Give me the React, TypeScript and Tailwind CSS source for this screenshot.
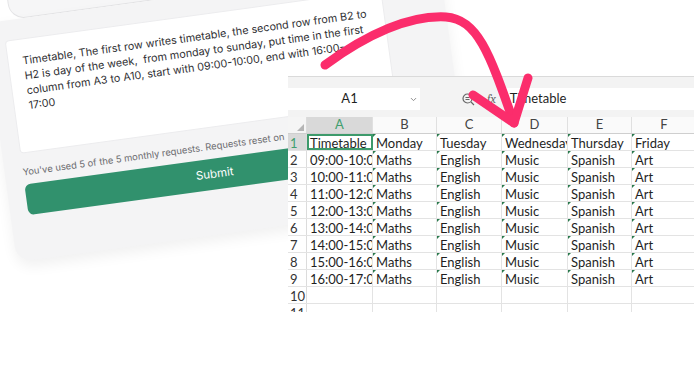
import { ChevronDown } from 'lucide-react'

const columns = [
  { key: 'A', width: 'w-[66px]' },
  { key: 'B', width: 'w-[64px]' },
  { key: 'C', width: 'w-[65px]' },
  { key: 'D', width: 'w-[66px]' },
  { key: 'E', width: 'w-[64px]' },
  { key: 'F', width: 'w-[65px]' },
]

const times = [
  '09:00-10:00',
  '10:00-11:00',
  '11:00-12:00',
  '12:00-13:00',
  '13:00-14:00',
  '14:00-15:00',
  '15:00-16:00',
  '16:00-17:00',
]

const rows: string[][] = [
  ['Timetable', 'Monday', 'Tuesday', 'Wednesday', 'Thursday', 'Friday'],
  ...times.map((t) => [t, 'Maths', 'English', 'Music', 'Spanish', 'Art']),
  ['', '', '', '', '', ''],
  ['', '', '', '', '', ''],
]

function PromptCard() {
  return (
    <div className="absolute left-[-16px] top-[-21px] w-[459px] origin-[18px_42px] -rotate-[7.8deg] font-['Inter',sans-serif]">
      <div className="ml-[26px] h-[42px] rounded-b-2xl border border-[#e4e4e6] bg-[#f6f6f7]" />
      <div className="h-[241px] rounded-2xl bg-[#f4f4f5] pl-[18px] pt-[20px] shadow-[0_6px_14px_rgba(0,0,0,0.06)]">
        <div className="h-[114px] w-[380px] rounded-sm border border-[#ececee] bg-white px-[14px] pt-[14px] text-[10.8px] leading-[15px] text-[#2f2f33] whitespace-pre">
          <div>Timetable, The first row writes timetable, the second row from B2 to</div>
          <div>H2 is day of the week,  from monday to sunday, put time in the first</div>
          <div>column from A3 to A10, start with 09:00-10:00, end with 16:00-</div>
          <div>17:00</div>
        </div>
        <p className="mt-[12px] text-[9.4px] leading-[14px] text-[#6c6c70]">
          You've used 5 of the 5 monthly requests. Requests reset on
        </p>
        <button className="mt-[5px] flex h-[31px] w-[380px] items-center justify-center rounded-md bg-[#31916d] text-[11.5px] text-white">
          Submit
        </button>
      </div>
    </div>
  )
}

function Spreadsheet() {
  return (
    <div className="absolute left-[288px] top-[76px] h-[236px] w-[410px] overflow-hidden bg-white font-['Lato',sans-serif] text-[#1f1f1f]">
      <div className="flex h-[41px] items-start border-t border-[#dadada] bg-[#f3f3f3] pt-[11px]">
        <div className="flex h-[22px] w-[132px] items-center bg-white pr-[2px] text-[13px]">
          <span className="flex-1 pl-[2px] text-center">A1</span>
          <ChevronDown size={9} strokeWidth={2.5} className="text-[#888]" />
        </div>
        <div className="ml-[42px] flex h-[22px] items-center gap-[12px] text-[#666]">
          <svg width="13" height="13" viewBox="0 0 13 13" fill="none" stroke="#666" strokeWidth="1.2">
            <circle cx="5.5" cy="5.5" r="4.5" />
            <path d="M3.5 4.5h4M3.5 6.5h4M9 9l3 3" />
          </svg>
          <span className="font-serif text-[12px] italic">fx</span>
        </div>
        <div className="ml-[10px] flex h-[22px] flex-1 items-center bg-white pl-[4px] text-[13px]">
          Timetable
        </div>
      </div>

      <div className="flex h-[17px] border-b border-[#cfcfcf] text-[13px] text-[#444]">
        <div className="relative w-[19px] border-r border-[#dcdcdc] bg-[#f5f5f5]">
          <span className="absolute bottom-[2px] right-[2px] h-0 w-0 border-b-[7px] border-l-[7px] border-b-[#b5b5b5] border-l-transparent" />
        </div>
        {columns.map((c) => (
          <div
            key={c.key}
            className={`${c.width} flex items-center justify-center border-r border-[#e0e0e0] ${
              c.key === 'A' ? 'bg-[#d9d9d9] text-[#3f9e6e]' : 'bg-[#fafafa]'
            }`}
          >
            {c.key}
          </div>
        ))}
      </div>

      {rows.map((row, r) => (
        <div key={r} className="flex h-[17px] border-b border-[#e3e3e3] pt-[1px] text-[13px] leading-[16px]">
          <div
            className={`-mt-[1px] w-[19px] border-r border-[#dcdcdc] pl-[2px] pt-[1px] text-[13px] ${
              r === 0 ? 'bg-[#d9d9d9] text-[#3f9e6e]' : 'bg-white text-[#333]'
            }`}
          >
            {r + 1}
          </div>
          {row.map((cell, c) => (
            <div
              key={c}
              className={`${columns[c].width} relative -mt-[1px] overflow-hidden whitespace-nowrap border-r border-[#e3e3e3] pl-[3px] pt-[1px] ${
                r === 0 && c === 0 ? 'outline-2 -outline-offset-2 outline-[#3d9a6b]' : ''
              }`}
            >
              {cell}
              {c > 0 && r < 9 && (
                <span className="absolute left-0 top-0 h-0 w-0 border-r-[3px] border-t-[3px] border-r-transparent border-t-[#2a7a4d]" />
              )}
            </div>
          ))}
        </div>
      ))}
    </div>
  )
}

function Arrow() {
  return (
    <svg className="pointer-events-none absolute inset-0" width="694" height="388" viewBox="0 0 694 388" fill="none">
      <path
        d="M325 65 C 365 36, 408 15, 446 17 C 478 19, 490 55, 514 123"
        stroke="#fb2d6c"
        strokeWidth="9"
        strokeLinecap="round"
        strokeLinejoin="round"
      />
      <path d="M473 95 L514 123 L528 78" stroke="#fb2d6c" strokeWidth="9" strokeLinecap="round" strokeLinejoin="round" />
    </svg>
  )
}

export default function App() {
  return (
    <div className="relative h-[388px] w-[694px] overflow-hidden bg-white">
      <PromptCard />
      <Spreadsheet />
      <Arrow />
    </div>
  )
}
